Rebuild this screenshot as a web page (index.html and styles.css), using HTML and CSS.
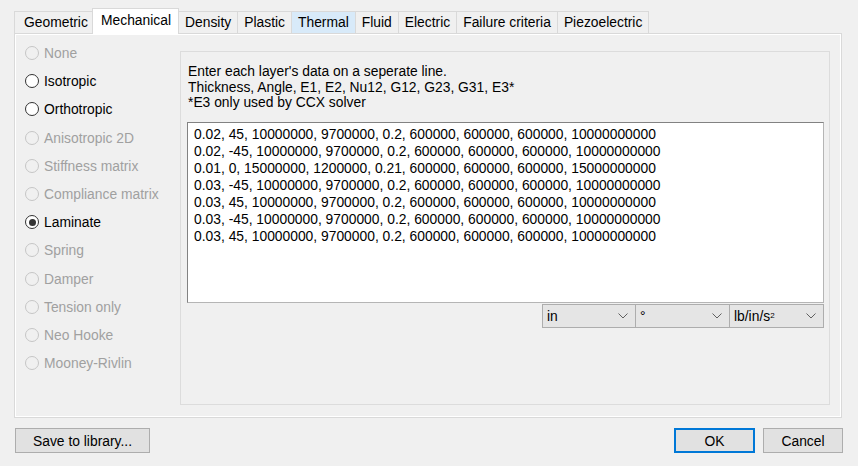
FILE: index.html
```html
<!DOCTYPE html>
<html lang="en">
<head>
    <meta charset="UTF-8">
    <title>Material properties</title>
    <link rel="stylesheet" href="styles.css">
</head>
<body>

<div class="dialog">
    <div class="tabs">
        <div class="tab">Geometric</div>
        <div class="tab active">Mechanical</div>
        <div class="tab">Density</div>
        <div class="tab">Plastic</div>
        <div class="tab hover">Thermal</div>
        <div class="tab">Fluid</div>
        <div class="tab">Electric</div>
        <div class="tab">Failure criteria</div>
        <div class="tab">Piezoelectric</div>
    </div>

    <div class="panel">
        <div class="radios">
            <div class="radio disabled"><span class="dot"></span>None</div>
            <div class="radio"><span class="dot"></span>Isotropic</div>
            <div class="radio"><span class="dot"></span>Orthotropic</div>
            <div class="radio disabled"><span class="dot"></span>Anisotropic 2D</div>
            <div class="radio disabled"><span class="dot"></span>Stiffness matrix</div>
            <div class="radio disabled"><span class="dot"></span>Compliance matrix</div>
            <div class="radio checked"><span class="dot"></span>Laminate</div>
            <div class="radio disabled"><span class="dot"></span>Spring</div>
            <div class="radio disabled"><span class="dot"></span>Damper</div>
            <div class="radio disabled"><span class="dot"></span>Tension only</div>
            <div class="radio disabled"><span class="dot"></span>Neo Hooke</div>
            <div class="radio disabled"><span class="dot"></span>Mooney-Rivlin</div>
        </div>

        <div class="group">
            <p class="hint">Enter each layer's data on a seperate line.<br>
            Thickness, Angle, E1, E2, Nu12, G12, G23, G31, E3*<br>
            *E3 only used by CCX solver</p>

            <div class="layers">0.02, 45, 10000000, 9700000, 0.2, 600000, 600000, 600000, 10000000000
0.02, -45, 10000000, 9700000, 0.2, 600000, 600000, 600000, 10000000000
0.01, 0, 15000000, 1200000, 0.21, 600000, 600000, 600000, 15000000000
0.03, -45, 10000000, 9700000, 0.2, 600000, 600000, 600000, 10000000000
0.03, 45, 10000000, 9700000, 0.2, 600000, 600000, 600000, 10000000000
0.03, -45, 10000000, 9700000, 0.2, 600000, 600000, 600000, 10000000000
0.03, 45, 10000000, 9700000, 0.2, 600000, 600000, 600000, 10000000000</div>

            <div class="units">
                <div class="combo">in<svg width="10" height="6" viewBox="0 0 10 6"><path d="M0.5 0.5 L5 5 L9.5 0.5" fill="none" stroke="#606060" stroke-width="1"/></svg></div>
                <div class="combo">°<svg width="10" height="6" viewBox="0 0 10 6"><path d="M0.5 0.5 L5 5 L9.5 0.5" fill="none" stroke="#606060" stroke-width="1"/></svg></div>
                <div class="combo">lb/in/s<sup>2</sup><svg width="10" height="6" viewBox="0 0 10 6"><path d="M0.5 0.5 L5 5 L9.5 0.5" fill="none" stroke="#606060" stroke-width="1"/></svg></div>
            </div>
        </div>
    </div>

    <div class="footer">
        <button class="btn save">Save to library...</button>
        <div class="right">
            <button class="btn ok">OK</button>
            <button class="btn">Cancel</button>
        </div>
    </div>
</div>

</body>
</html>
```

FILE: styles.css
```css
body {
    margin: 0;
    background-color: #f0f0f0;
    font-family: "Liberation Sans", Arial, sans-serif;
    font-size: 13.85px;
    color: #000;
}

.dialog {
    padding: 10px 16px 0 14px;
}

.tabs {
    display: flex;
    height: 23px;
    align-items: flex-end;
}

.tab {
    height: 22px;
    line-height: 21px;
    padding: 0 6px;
    border: 1px solid #d9d9d9;
    border-bottom: none;
    margin-right: -1px;
    background: #f0f0f0;
    box-sizing: border-box;
}

.tab:first-child {
    width: 79px;
    padding-left: 9px;
}

.tab.active {
    height: 26px;
    line-height: 22px;
    background: #fff;
    position: relative;
    z-index: 1;
    margin-bottom: -1px;
    padding: 0 7px 0 8px;
}

.tab.hover {
    background: #d8eaf9;
}

.panel {
    display: flex;
    height: 385px;
    box-sizing: border-box;
    border: 1px solid #d9d9d9;
    box-shadow: inset 0 0 0 1px #fff;
}

.radios {
    width: 165px;
    padding: 5px 0 0 10px;
    box-sizing: border-box;
}

.radio {
    height: 28.2px;
    display: flex;
    align-items: center;
}

.radio .dot {
    width: 14px;
    height: 14px;
    border: 1.5px solid #333;
    border-radius: 50%;
    box-sizing: border-box;
    margin-right: 5px;
    background: #fff;
    display: flex;
    align-items: center;
    justify-content: center;
}

.radio.disabled {
    color: #a0a0a0;
}

.radio.disabled .dot {
    border: 1px solid #c6c6c6;
    background: #f0f0f0;
}

.radio.checked .dot::after {
    content: "";
    width: 7px;
    height: 7px;
    border-radius: 50%;
    background: #333;
}

.group {
    margin: 17px 11px 12px 0;
    flex: 1;
    border: 1px solid #dcdcdc;
    padding: 12px 5px 0 6px;
    display: flex;
    flex-direction: column;
    align-items: flex-end;
}

.hint {
    margin: 0 0 11px 1px;
    line-height: 15.5px;
    align-self: flex-start;
}

.layers {
    width: 637px;
    height: 181px;
    box-sizing: border-box;
    background: #fff;
    border: 1px solid #828282;
    border-right-color: #b5b5b5;
    border-bottom-color: #b5b5b5;
    padding: 3px 6px;
    line-height: 17px;
    white-space: pre;
    overflow: hidden;
}

.units {
    display: flex;
    margin-top: 1px;
}

.combo {
    width: 95px;
    height: 24px;
    box-sizing: border-box;
    margin-left: -1px;
    background: #e5e5e5;
    border: 1px solid #adadad;
    padding: 0 7px 0 4px;
    display: flex;
    align-items: center;
    justify-content: space-between;
}

.combo:first-child {
    width: 94px;
}

.combo sup {
    font-size: 8px;
    vertical-align: 7px;
    line-height: 0;
    margin-right: auto;
}

.footer {
    display: flex;
    justify-content: space-between;
    margin-top: 10px;
}

.btn {
    height: 25px;
    width: 80px;
    font-family: "Liberation Sans", Arial, sans-serif;
    font-size: 13.85px;
    background: #e1e1e1;
    border: 1px solid #adadad;
    color: #000;
    padding: 0;
}

.btn.save {
    width: 135px;
    margin-left: 1px;
}

.btn.ok {
    border: 2px solid #0078d7;
    margin-right: 8px;
    width: 81px;
}

.right {
    display: flex;
    margin-right: -1px;
}
```
